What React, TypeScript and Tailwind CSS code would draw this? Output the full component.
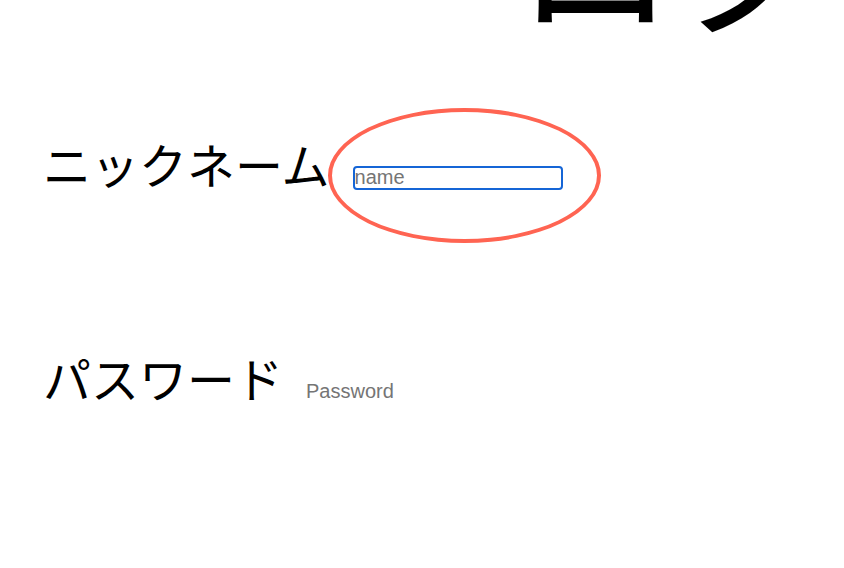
import React from "react";

export default function App() {
  return (
    <div
      className="relative w-[844px] h-[568px] overflow-hidden bg-white text-black"
      style={{ fontFamily: '"Noto Sans CJK JP", "Noto Sans", sans-serif' }}
    >
      <h1 className="mt-[-129px] pl-[515px] text-[160px] leading-none font-normal whitespace-nowrap">
        ログイン
      </h1>

      <div className="mt-[108px] flex items-baseline pl-[43px]">
        <label className="text-[48px] leading-none whitespace-nowrap">ニックネーム</label>
        <input
          type="text"
          placeholder="name"
          className="ml-[23px] w-[210px] h-[24px] border-2 border-[#1565d6] rounded-[4px] px-0 text-[20px] leading-none outline-none placeholder:text-[#757575] bg-white"
          style={{ fontFamily: '"Liberation Sans", Arial, sans-serif' }}
        />
      </div>

      <div className="mt-[163px] flex items-baseline pl-[43px]">
        <label className="text-[48px] leading-none whitespace-nowrap">パスワード</label>
        <input
          type="password"
          placeholder="Password"
          className="ml-[23px] w-[210px] h-[24px] border-0 px-0 text-[20px] leading-none outline-none placeholder:text-[#757575] bg-white"
          style={{ fontFamily: '"Liberation Sans", Arial, sans-serif' }}
        />
      </div>

      <div className="pointer-events-none absolute left-[328px] top-[108px] w-[273px] h-[135px] rounded-[50%] border-4 border-[#ff6452]" />
    </div>
  );
}
